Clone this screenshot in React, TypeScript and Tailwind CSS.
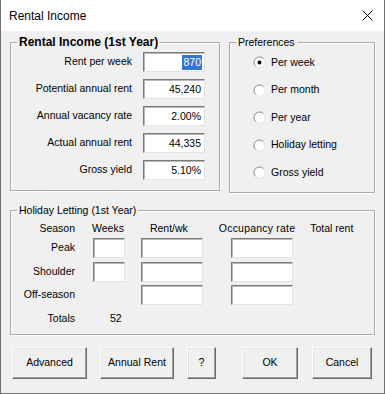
import React from "react";

const font = "font-['Liberation_Sans',Arial,sans-serif]";

function Group({
  title,
  bold,
  className,
  children,
}: {
  title: string;
  bold?: boolean;
  className?: string;
  children: React.ReactNode;
}) {
  return (
    <div
      className={`relative border border-[#a9a9a9] shadow-[1px_1px_0_#ffffff,inset_1px_1px_0_#ffffff] ${className ?? ""}`}
    >
      <span
        className={`absolute -top-[8px] left-[6px] bg-[#f0f0f0] px-[2px] leading-[14px] ${
          bold ? "text-[12px] font-bold" : "text-[10.5px]"
        }`}
      >
        {title}
      </span>
      {children}
    </div>
  );
}

function Field({
  w = 62,
  value,
  selected,
}: {
  w?: number;
  value?: string;
  selected?: boolean;
}) {
  return (
    <div
      className="h-[20px] bg-white border border-t-[#7a7a7a] border-l-[#7a7a7a] border-r-[#e3e3e3] border-b-[#e3e3e3] shadow-[inset_1px_1px_0_#b8b8b8] flex items-center justify-end pr-[2px] text-[10.5px]"
      style={{ width: w }}
    >
      {value &&
        (selected ? (
          <span className="bg-[#3377d6] text-white leading-[15px] px-[1px]">
            {value}
          </span>
        ) : (
          <span className="leading-[14px] px-[1px]">{value}</span>
        ))}
    </div>
  );
}

function Radio({ label, checked }: { label: string; checked?: boolean }) {
  return (
    <div className="h-[27.5px] flex items-center">
      <svg width="13" height="13" viewBox="0 0 13 13" className="shrink-0">
        <circle cx="6.5" cy="6.5" r="5.5" fill="#ffffff" stroke="#e6e6e6" />
        <path
          d="M 2.6 10.4 A 5.5 5.5 0 0 1 10.4 2.6"
          fill="none"
          stroke="#8c8c8c"
        />
        {checked && <circle cx="6.5" cy="6.5" r="2" fill="#000000" />}
      </svg>
      <span className="ml-[5px] text-[10.5px]">{label}</span>
    </div>
  );
}

function Btn({ label, w }: { label: string; w: number }) {
  return (
    <button
      type="button"
      className="h-[32px] bg-[#f0f0f0] border border-t-white border-l-white border-r-[#696969] border-b-[#696969] shadow-[inset_-1px_-1px_0_#a0a0a0,inset_1px_1px_0_#e3e3e3] text-[10.5px] text-black"
      style={{ width: w }}
    >
      {label}
    </button>
  );
}

const rentRows: [string, string, boolean?][] = [
  ["Rent per week", "870", true],
  ["Potential annual rent", "45,240"],
  ["Annual vacancy rate", "2.00%"],
  ["Actual annual rent", "44,335"],
  ["Gross yield", "5.10%"],
];

export default function App() {
  return (
    <div
      className={`w-[385px] h-[394px] bg-[#f0f0f0] border-x border-b border-[#6f6f6f] flex flex-col text-black ${font}`}
    >
      {/* Title bar */}
      <div className="h-[31px] bg-white flex items-center justify-between pl-[8px] pr-[11px] shrink-0">
        <span className="text-[12px]">Rental Income</span>
        <svg width="11" height="11" viewBox="0 0 11 11">
          <path d="M0.5 0.5 L10.5 10.5 M10.5 0.5 L0.5 10.5" stroke="#000" strokeWidth="1" />
        </svg>
      </div>

      <div className="flex flex-col pl-[9px] pt-[11px]">
        <div className="flex items-start">
          {/* Rental income */}
          <Group title="Rental Income (1st Year)" bold className="w-[210px] h-[149px]">
            <div className="grid grid-cols-[1fr_62px] gap-x-[11px] gap-y-[7px] pt-[9px] pr-[14px]">
              {rentRows.map(([label, value, sel]) => (
                <React.Fragment key={label}>
                  <div className="h-[20px] flex items-center justify-end text-[10.5px]">
                    {label}
                  </div>
                  <Field value={value} selected={sel} />
                </React.Fragment>
              ))}
            </div>
          </Group>

          {/* Preferences */}
          <Group title="Preferences" className="ml-[9px] w-[146px] h-[151px]">
            <div className="flex flex-col pt-[6px] pl-[23px]">
              <Radio label="Per week" checked />
              <Radio label="Per month" />
              <Radio label="Per year" />
              <Radio label="Holiday letting" />
              <Radio label="Gross yield" />
            </div>
          </Group>
        </div>

        {/* Holiday letting */}
        <Group title="Holiday Letting (1st Year)" className="mt-[17px] w-[365px] h-[125px]">
          <div className="flex flex-col pt-[10px] text-[10.5px]">
            <div className="h-[16px] flex items-center">
              <span className="w-[64px] text-right">Season</span>
              <span className="ml-[17px]">Weeks</span>
              <span className="ml-[26px]">Rent/wk</span>
              <span className="ml-[31px] tracking-[0.2px]">Occupancy rate</span>
              <span className="ml-[15px]">Total rent</span>
            </div>
            <div className="flex flex-col gap-[3.5px] mt-[1px]">
              {["Peak", "Shoulder", "Off-season"].map((s, i) => (
                <div key={s} className="h-[20px] flex items-center">
                  <span className="w-[64px] text-right">{s}</span>
                  <div className="ml-[18px] w-[32px]">{i < 2 && <Field w={32} />}</div>
                  <div className="ml-[16px]">
                    <Field />
                  </div>
                  <div className="ml-[28px]">
                    <Field />
                  </div>
                </div>
              ))}
            </div>
            <div className="h-[16px] flex items-center mt-[6px]">
              <span className="w-[64px] text-right">Totals</span>
              <span className="ml-[35px]">52</span>
            </div>
          </div>
        </Group>

        {/* Buttons */}
        <div className="flex items-center mt-[12px] pl-[2px]">
          <Btn label="Advanced" w={75} />
          <div className="ml-[13px]">
            <Btn label="Annual Rent" w={74} />
          </div>
          <div className="ml-[13px]">
            <Btn label="?" w={29} />
          </div>
          <div className="ml-[26px]">
            <Btn label="OK" w={56} />
          </div>
          <div className="ml-[14px]">
            <Btn label="Cancel" w={60} />
          </div>
        </div>
      </div>
    </div>
  );
}
